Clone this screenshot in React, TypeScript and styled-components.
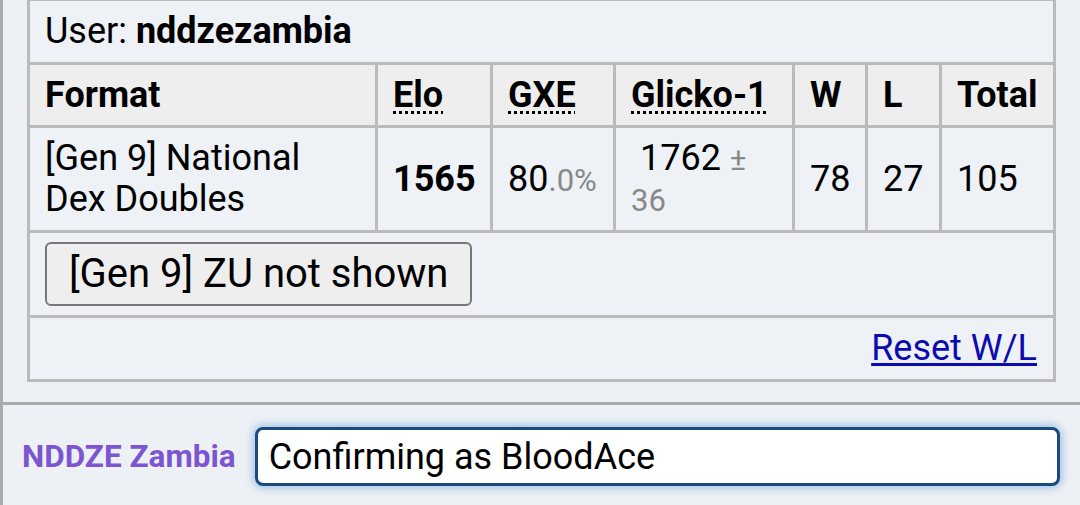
import React from "react";
import styled, { createGlobalStyle } from "styled-components";

const GlobalStyle = createGlobalStyle`
  html, body {
    margin: 0;
    padding: 0;
    background: #edf1f5;
    font-family: Roboto, "Noto Sans", "Liberation Sans", sans-serif;
    color: #000;
  }
`;

const Page = styled.div`
  width: 1080px;
  height: 505px;
  box-sizing: border-box;
  border-left: 3px solid #aaaaaa;
  display: flex;
  flex-direction: column;
  overflow: hidden;
`;

const TopPane = styled.div`
  padding: 0 24px 20px 24px;
  border-bottom: 3px solid #aaaaaa;
`;

const Ladder = styled.div`
  margin-top: -2px;
  display: grid;
  grid-template-columns: 348px 115px 123px 179px 73px 74px 114px;
  width: max-content;
  border-right: 3px solid #bbbbbb;
  border-bottom: 3px solid #bbbbbb;
  font-size: 36px;
  line-height: 41px;
`;

const Cell = styled.div<{ $span?: boolean; $head?: boolean; $align?: string }>`
  box-sizing: border-box;
  border-top: 3px solid #bbbbbb;
  border-left: 3px solid #bbbbbb;
  padding: 10px 16px 9.5px 15px;
  background: ${(p) => (p.$head ? "#eeeeee" : "#eef1f5")};
  font-weight: ${(p) => (p.$head ? 700 : 400)};
  grid-column: ${(p) => (p.$span ? "1 / -1" : "auto")};
  display: flex;
  align-items: center;
  justify-content: ${(p) => p.$align || "flex-start"};
  min-width: 0;
`;

const UserName = styled.strong`
  font-weight: 700;
`;

const Abbr = styled.abbr`
  text-decoration: underline dotted;
  text-underline-offset: 4px;
  text-decoration-thickness: 3px;
  cursor: help;
`;

const Elo = styled.strong`
  font-weight: 700;
  white-space: nowrap;
`;

const Small = styled.small`
  font-size: 31px;
  line-height: 30px;
  color: #888888;
`;

const Glicko = styled.span`
  display: block;
`;

const ShowButton = styled.button`
  font-family: inherit;
  font-size: 40px;
  line-height: 40px;
  color: #000;
  background: #eeeeee;
  border: 2px solid #777777;
  border-radius: 6px;
  padding: 10px 22px;
  margin: -1px 0 0 0;
  white-space: nowrap;
`;

const ResetLink = styled.a`
  color: #0b0bb0;
  text-decoration: underline;
  text-decoration-thickness: 3px;
  text-underline-offset: 3px;
`;

const ChatBar = styled.div`
  flex: 1;
  display: flex;
  align-items: center;
  gap: 19px;
  padding: 4px 20px 0 19px;
`;

const Sender = styled.span`
  font-size: 31.5px;
  font-weight: 700;
  color: #7c56d0;
  white-space: nowrap;
`;

const ChatInput = styled.div`
  flex: 1;
  box-sizing: border-box;
  height: 59px;
  background: #ffffff;
  border: 3px solid #1b4a7d;
  border-radius: 8px;
  box-shadow: 0 0 9px 2px rgba(60, 130, 210, 0.45);
  padding: 0 11px;
  display: flex;
  align-items: center;
  font-size: 36px;
  color: #000;
`;

export default function App() {
  return (
    <>
      <GlobalStyle />
      <Page>
        <TopPane>
          <Ladder>
            <Cell $span>
              <span>
                User: <UserName>nddzezambia</UserName>
              </span>
            </Cell>
            <Cell $head>Format</Cell>
            <Cell $head>
              <Abbr title="Elo rating">Elo</Abbr>
            </Cell>
            <Cell $head>
              <Abbr title="user's percentage chance of winning a random battle">GXE</Abbr>
            </Cell>
            <Cell $head>
              <Abbr title="Glicko-1 rating system: rating±deviation">Glicko-1</Abbr>
            </Cell>
            <Cell $head>W</Cell>
            <Cell $head>L</Cell>
            <Cell $head>Total</Cell>

            <Cell>
              <span>[Gen 9] National Dex Doubles</span>
            </Cell>
            <Cell>
              <Elo>1565</Elo>
            </Cell>
            <Cell>
              <span>
                80<Small>.0%</Small>
              </span>
            </Cell>
            <Cell>
              <Glicko>
                &nbsp;1762 <Small>±</Small> <Small>36</Small>
              </Glicko>
            </Cell>
            <Cell>78</Cell>
            <Cell>27</Cell>
            <Cell>105</Cell>

            <Cell $span>
              <ShowButton>[Gen 9] ZU not shown</ShowButton>
            </Cell>
            <Cell $span $align="flex-end">
              <ResetLink href="#">Reset W/L</ResetLink>
            </Cell>
          </Ladder>
        </TopPane>
        <ChatBar>
          <Sender>NDDZE Zambia</Sender>
          <ChatInput>Confirming as BloodAce</ChatInput>
        </ChatBar>
      </Page>
    </>
  );
}
